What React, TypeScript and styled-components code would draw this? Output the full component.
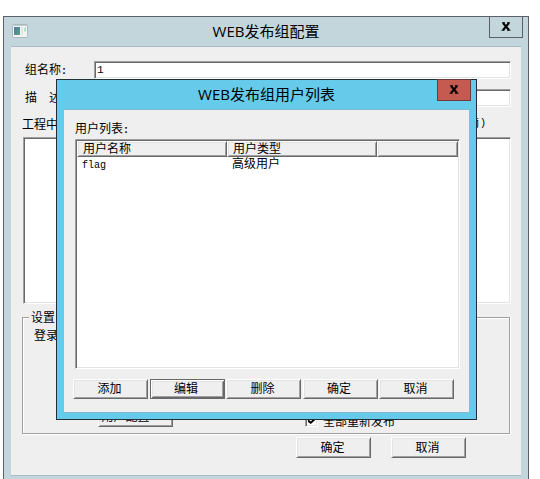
import React from 'react';
import styled, { createGlobalStyle, css } from 'styled-components';

const GlobalStyle = createGlobalStyle`
  *, *::before, *::after { box-sizing: border-box; }
  body {
    margin: 0;
    background: #fff;
    color: #000;
    font: 12px/14px "Noto Sans CJK SC", sans-serif;
  }
  button, input { font: inherit; color: inherit; }
`;

const sunken = css`
  border: 1px solid;
  border-color: #a0a0a0 #fff #fff #a0a0a0;
  box-shadow: inset 1px 1px 0 #696969, inset -1px -1px 0 #e3e3e3;
`;

const raised = css`
  border: 1px solid;
  border-color: #fff #696969 #696969 #fff;
  box-shadow: inset 1px 1px 0 #e3e3e3, inset -1px -1px 0 #a0a0a0;
`;

const Desktop = styled.main`
  position: relative;
  height: 100vh;
  padding: 16px 11px 0 3px;
  overflow: hidden;
`;

const WindowFrame = styled.section<{ $active?: boolean }>`
  padding: 0 7px 6px;
  border: 1px solid ${(p) => (p.$active ? '#20303a' : '#5c606b')};
  background: ${(p) => (p.$active ? '#66cbea' : '#c3d6dc')};
`;

const DialogLayer = styled.div`
  position: absolute;
  top: 79px;
  left: 56px;
  right: 63px;
`;

const TitleBar = styled.header`
  display: grid;
  grid-template-columns: 34px 1fr 34px;
  align-items: start;
  height: 29px;
  margin-right: -2px;
  margin-left: -2px;
`;

const Title = styled.h1`
  margin: 0;
  font: 400 15px/29px "Open Sans", "Noto Sans CJK SC", sans-serif;
  text-align: center;
  white-space: nowrap;
`;

const AppIcon = styled.svg`
  width: 16px;
  height: 14px;
  margin: 7px 0 0 3px;
`;

const CloseButton = styled.button<{ $active?: boolean }>`
  display: grid;
  grid-column: 3;
  place-items: center;
  width: 34px;
  height: 22px;
  margin-top: -1px;
  padding: 0 0 1px;
  border: 1px solid ${(p) => (p.$active ? '#6b3b3d' : '#5c606b')};
  background: ${(p) => (p.$active ? '#c45a50' : '#c3d6dc')};
`;

const Client = styled.div<{ $active?: boolean }>`
  display: flex;
  flex-direction: column;
  border: 1px solid ${(p) => (p.$active ? '#80b8cf' : '#a9bac6')};
  border-right: 0;
  border-left: 0;
  background: #efefef;
`;

const SetupForm = styled.form`
  display: flex;
  flex-direction: column;
  padding: 14px 10px 17px 11px;
`;

const Field = styled.label`
  display: grid;
  grid-template-columns: 69px 1fr;
  align-items: start;
  height: 18px;
  margin: 0 0 10px 3px;
  line-height: 16px;
  white-space: nowrap;
`;

const Latin = styled.span`
  font-family: "Liberation Mono", monospace;
  font-size: 10px;
  line-height: 10px;
`;

const Colon = styled(Latin)`
  font-weight: 700;
`;

const TextInput = styled.input`
  ${sunken}
  width: 100%;
  height: 18px;
  padding: 0 2px;
  border-radius: 0;
  background: #fff;
  font: 11px/14px "Liberation Mono", monospace;
  outline: 0;
`;

const Caption = styled.div`
  display: flex;
  align-items: center;
  justify-content: space-between;
  padding: 0 25px 6px 0;
`;

const ProjectList = styled.div`
  ${sunken}
  height: 167px;
  margin-left: 1px;
  background: #fff;
`;

const Group = styled.fieldset`
  min-width: 0;
  height: 124px;
  margin: 6px 1px 0 0;
  padding: 4px 11px 0;
  border: 1px solid #a0a0a0;
  box-shadow: 1px 1px 0 #fff, inset 1px 1px 0 #fff;
`;

const Legend = styled.legend`
  margin-left: -5px;
  padding: 0 2px;
  background: #efefef;
`;

const GroupActions = styled.div`
  display: grid;
  grid-template-columns: 207px 1fr;
  align-items: end;
  margin: 65px 0 0 64px;
`;

const CheckLabel = styled.label`
  display: flex;
  align-items: center;
  gap: 5px;
  height: 13px;
  line-height: 12px;
`;

const CheckBox = styled.input`
  ${sunken}
  display: grid;
  place-items: center;
  width: 13px;
  height: 13px;
  margin: 0;
  appearance: none;
  background: #fff;

  &:checked::after {
    content: "";
    width: 7px;
    height: 7px;
    background: #000;
    clip-path: polygon(0 30%, 40% 65%, 100% 0, 100% 45%, 40% 100%, 0 70%);
  }
`;

const PushButton = styled.button<{ $focused?: boolean; $tall?: boolean; $shifted?: boolean }>`
  ${raised}
  width: 75px;
  height: ${(p) => (p.$tall ? 21 : 20)}px;
  padding: 0 ${(p) => (p.$shifted ? 20 : 2)}px 2px 0;
  border-radius: 0;
  background: #efefef;
  line-height: 16px;
  white-space: nowrap;
  ${(p) =>
    p.$focused &&
    css`
      border-color: #696969;
      box-shadow: inset 1px 1px 0 #fff, inset -1px -1px 0 #696969,
        inset 2px 2px 0 #e3e3e3, inset -2px -2px 0 #a0a0a0;
    `}
`;

const FormActions = styled.div`
  display: flex;
  justify-content: flex-end;
  gap: 20px;
  margin-top: 3px;
  padding-right: 45px;
`;

const UserPanel = styled.div`
  display: flex;
  flex-direction: column;
  padding: 11px 9px 13px;
`;

const ListCaption = styled.div`
  height: 16px;
  margin: 0 0 2px 2px;
  line-height: 14px;
`;

const ListBox = styled.div`
  ${sunken}
  height: 230px;
  margin-left: 2px;
  padding: 1px;
  background: #fff;
`;

const UserTable = styled.table`
  width: 100%;
  border-collapse: separate;
  border-spacing: 0;
  table-layout: fixed;
`;

const HeadCell = styled.th<{ $width?: number }>`
  ${raised}
  width: ${(p) => (p.$width ? `${p.$width}px` : 'auto')};
  height: 16px;
  padding: 0 5px 2px;
  background: #efefef;
  font-weight: 400;
  line-height: 12px;
  text-align: left;
`;

const Cell = styled.td`
  height: 14px;
  padding: 0 5px;
  line-height: 12px;
  vertical-align: top;
`;

const DialogActions = styled.div`
  display: flex;
  justify-content: space-between;
  margin-top: 10px;
  padding-right: 6px;
`;

const CloseGlyph = () => (
  <svg width="10" height="9" viewBox="0 0 10 9" aria-hidden="true">
    <path d="M2 1L8 8M8 1L2 8" stroke="#000" strokeWidth="2" />
    <path d="M1 .8H4M6 .8H9M.5 8.2H3.5M6 8.2H9.5" stroke="#000" strokeWidth="1" />
  </svg>
);

const users = [{ name: 'flag', type: '高级用户' }];
const userActions = ['添加', '编辑', '删除', '确定', '取消'];

export default function App() {
  return (
    <>
      <GlobalStyle />
      <Desktop>
        <WindowFrame aria-label="WEB发布组配置">
          <TitleBar>
            <AppIcon viewBox="0 0 16 14" aria-hidden="true">
              <defs>
                <linearGradient id="pane" x1="0" y1="0" x2="1" y2="1">
                  <stop offset="0" stopColor="#5478a8" />
                  <stop offset="1" stopColor="#53a67b" />
                </linearGradient>
              </defs>
              <rect x=".5" y=".5" width="15" height="13" rx="1" fill="#f3f5f5" stroke="#a9b8bf" />
              <path d="M1 1.5H15" stroke="#c0cbd2" />
              <rect x="2" y="3" width="6" height="8" fill="url(#pane)" />
              <rect x="9" y="3" width="2" height="8" fill="#e2e4e6" />
              <path d="M12 4L14 3V7L12 8Z" fill="#b9dfcb" />
            </AppIcon>
            <Title>WEB发布组配置</Title>
            <CloseButton type="button" aria-label="关闭">
              <CloseGlyph />
            </CloseButton>
          </TitleBar>
          <Client>
            <SetupForm onSubmit={(e) => e.preventDefault()}>
              <Field>
                <span>组名称<Colon>:</Colon></span>
                <TextInput defaultValue="1" />
              </Field>
              <Field>
                <span>描　述<Colon>:</Colon></span>
                <TextInput />
              </Field>
              <Caption>
                <span>工程中</span>
                <Latin>j)</Latin>
              </Caption>
              <ProjectList />
              <Group>
                <Legend>设置</Legend>
                <div>登录</div>
                <GroupActions>
                  <PushButton type="button" $shifted>用户配置</PushButton>
                  <CheckLabel>
                    <CheckBox type="checkbox" defaultChecked />
                    全部重新发布
                  </CheckLabel>
                </GroupActions>
              </Group>
              <FormActions>
                <PushButton type="submit" $tall>确定</PushButton>
                <PushButton type="button" $tall>取消</PushButton>
              </FormActions>
            </SetupForm>
          </Client>
        </WindowFrame>

        <DialogLayer>
          <WindowFrame $active role="dialog" aria-label="WEB发布组用户列表">
            <TitleBar>
              <span />
              <Title as="h2">WEB发布组用户列表</Title>
              <CloseButton type="button" $active aria-label="关闭">
                <CloseGlyph />
              </CloseButton>
            </TitleBar>
            <Client $active>
              <UserPanel>
                <ListCaption id="user-list">用户列表<Colon>:</Colon></ListCaption>
                <ListBox>
                  <UserTable aria-labelledby="user-list">
                    <thead>
                      <tr>
                        <HeadCell $width={150}>用户名称</HeadCell>
                        <HeadCell $width={150}>用户类型</HeadCell>
                        <HeadCell />
                      </tr>
                    </thead>
                    <tbody>
                      {users.map((user) => (
                        <tr key={user.name}>
                          <Cell><Latin>{user.name}</Latin></Cell>
                          <Cell>{user.type}</Cell>
                          <Cell />
                        </tr>
                      ))}
                    </tbody>
                  </UserTable>
                </ListBox>
                <DialogActions>
                  {userActions.map((action) => (
                    <PushButton key={action} type="button" $focused={action === '编辑'}>
                      {action}
                    </PushButton>
                  ))}
                </DialogActions>
              </UserPanel>
            </Client>
          </WindowFrame>
        </DialogLayer>
      </Desktop>
    </>
  );
}
